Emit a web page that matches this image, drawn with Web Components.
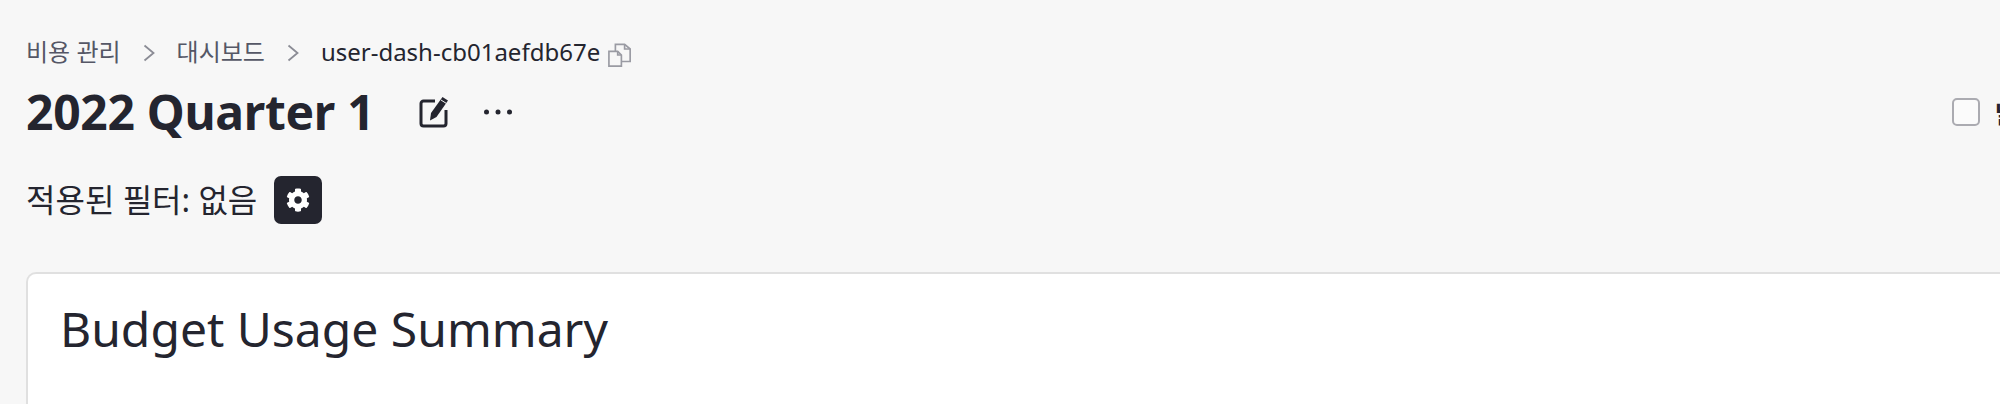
<!DOCTYPE html>
<html lang="ko">
<head>
<meta charset="utf-8">
<title>2022 Quarter 1</title>
<style>
  html, body { margin: 0; height: 100%; overflow: hidden; }
  body {
    background: #f7f7f7;
    color: #24252f;
    font-family: "Noto Sans", "Noto Sans CJK KR", sans-serif;
  }
</style>
</head>
<body>
<dash-page>
  <dash-breadcrumb slot="crumbs">
    <span>비용 관리</span>
    <span>대시보드</span>
    <span class="current">user-dash-cb01aefdb67e</span>
  </dash-breadcrumb>
  <dash-header slot="header" heading="2022 Quarter 1" toggle="날짜"></dash-header>
  <dash-filters slot="filters">적용된 필터: 없음</dash-filters>
  <dash-card slot="card" heading="Budget Usage Summary"></dash-card>
</dash-page>

<script>
const pageTemplate = document.createElement('template');
pageTemplate.innerHTML = `
  <style>
    :host {
      display: flex;
      flex-direction: column;
      width: 2000px;
      height: 404px;
      box-sizing: border-box;
      padding: 32px 0 0 26px;
      overflow: hidden;
    }
  </style>
  <slot name="crumbs"></slot>
  <slot name="header"></slot>
  <slot name="filters"></slot>
  <slot name="card"></slot>
`;

class DashPage extends HTMLElement {
  constructor() {
    super();
    this.attachShadow({ mode: 'open' }).appendChild(pageTemplate.content.cloneNode(true));
  }
}

const breadcrumbTemplate = document.createElement('template');
breadcrumbTemplate.innerHTML = `
  <style>
    :host {
      display: flex;
      align-items: center;
      height: 40px;
      font-size: 24px;
      line-height: 40px;
      color: #555766;
    }
    .items { display: flex; align-items: center; }
    .copy { margin-left: 8px; margin-top: 5px; display: block; }
    ::slotted(span) { white-space: nowrap; }
    ::slotted(.current) { color: #24252f; }
    ::slotted(span:not(:first-child)) {
      margin-left: 56px;
      position: relative;
    }
  </style>
  <div class="items"><slot></slot></div>
  <svg class="copy" width="24" height="24" viewBox="0 0 26 26" fill="none" stroke="#9a9ba3" stroke-width="1.8">
    <path d="M1 9h9.500l4 4v12H1z"/>
    <path d="M8 9V1.500h10l6 5V20H15"/>
    <path d="M18 1.500v5h6M10.500 9v4h4"/>
  </svg>
`;

class DashBreadcrumb extends HTMLElement {
  constructor() {
    super();
    this.attachShadow({ mode: 'open' }).appendChild(breadcrumbTemplate.content.cloneNode(true));
  }
}

const chevronTemplate = document.createElement('template');
chevronTemplate.innerHTML = `
  <style>
    :host { position: absolute; display: block; left: -35px; top: 50%; width: 14px; height: 20px; margin-top: -9px; }
    svg { display: block; }
  </style>
  <svg width="14" height="20" viewBox="0 0 14 20" fill="none" stroke="#8b8c95" stroke-width="1.8">
    <path d="M2.500 2.500l9 7.500-9 7.500"/>
  </svg>
`;

class DashChevron extends HTMLElement {
  constructor() {
    super();
    this.attachShadow({ mode: 'open' }).appendChild(chevronTemplate.content.cloneNode(true));
  }
}

const headerTemplate = document.createElement('template');
headerTemplate.innerHTML = `
  <style>
    :host {
      display: flex;
      align-items: center;
      height: 80px;
    }
    h1 {
      margin: 0;
      font-size: 48px;
      line-height: 80px;
      font-weight: 700;
      letter-spacing: -0.3px;
      color: #24252f;
      white-space: nowrap;
    }
    .edit { margin-left: 45px; display: block; }
    .more { margin-left: 34px; display: block; }
    .toggle {
      position: absolute;
      left: 1952px;
      display: flex;
      align-items: center;
      gap: 15px;
      font-size: 24px;
      font-weight: 700;
      white-space: nowrap;
    }
    .box {
      width: 24px;
      height: 24px;
      border: 2px solid #ababb1;
      border-radius: 5px;
      background: #fbfbfb;
      flex: none;
    }
  </style>
  <h1></h1>
  <svg class="edit" width="30" height="32" viewBox="0 0 30 32" fill="none">
    <path d="M16 5H4.500A2.500 2.500 0 0 0 2 7.500v20A2.500 2.500 0 0 0 4.500 30h20a2.500 2.500 0 0 0 2.500-2.500V14" stroke="#24252f" stroke-width="3"/>
    <path d="M23.500 1l5.500 3.500-11.500 16.500-6.500 3.500 1-7.500z" fill="#24252f"/>
    <path d="M22 4l5.500 3.500" stroke="#f7f7f7" stroke-width="1"/>
  </svg>
  <svg class="more" width="30" height="8" viewBox="0 0 30 8" fill="#24252f">
    <circle cx="3.500" cy="4" r="2.500"/><circle cx="15" cy="4" r="2.500"/><circle cx="26.500" cy="4" r="2.500"/>
  </svg>
  <label class="toggle"><span class="box"></span><span class="label"></span></label>
`;

class DashHeader extends HTMLElement {
  constructor() {
    super();
    const root = this.attachShadow({ mode: 'open' });
    root.appendChild(headerTemplate.content.cloneNode(true));
    root.querySelector('h1').textContent = this.getAttribute('heading');
    root.querySelector('.label').textContent = this.getAttribute('toggle');
  }
}

const filtersTemplate = document.createElement('template');
filtersTemplate.innerHTML = `
  <style>
    :host {
      display: flex;
      align-items: center;
      gap: 17px;
      margin-top: 24px;
      height: 48px;
      font-size: 32px;
      color: #24252f;
    }
    span { padding-bottom: 4px; }
    button {
      width: 48px;
      height: 48px;
      padding: 0;
      border: 0;
      border-radius: 7px;
      background: #24252f;
      display: flex;
      align-items: center;
      justify-content: center;
    }
    svg { display: block; }
  </style>
  <span><slot></slot></span>
  <button type="button" aria-label="필터 설정">
    <svg width="24" height="24" viewBox="0 0 512 512" fill="#fff">
      <path d="M487.400 315.700l-42.600-24.600c4.300-23.200 4.300-47 0-70.200l42.600-24.600c4.900-2.800 7.100-8.600 5.500-14-11.100-35.600-30-67.800-54.700-94.600-3.800-4.100-10-5.100-14.800-2.300L380.800 110c-17.900-15.400-38.500-27.300-60.800-35.100V25.800c0-5.600-3.900-10.500-9.400-11.700-36.700-8.200-74.300-7.800-109.200 0-5.500 1.200-9.400 6.100-9.400 11.700V75c-22.200 7.900-42.800 19.800-60.800 35.100L88.700 85.500c-4.900-2.800-11-1.900-14.800 2.300-24.700 26.700-43.600 58.900-54.700 94.600-1.700 5.400.6 11.200 5.500 14L67.300 221c-4.300 23.200-4.300 47 0 70.200l-42.600 24.600c-4.900 2.800-7.100 8.600-5.500 14 11.100 35.600 30 67.800 54.700 94.600 3.800 4.100 10 5.100 14.800 2.300l42.600-24.600c17.900 15.400 38.500 27.300 60.800 35.100v49.200c0 5.600 3.900 10.500 9.400 11.700 36.700 8.200 74.300 7.800 109.200 0 5.500-1.200 9.400-6.100 9.400-11.700v-49.200c22.200-7.900 42.800-19.800 60.800-35.100l42.600 24.600c4.900 2.800 11 1.900 14.800-2.300 24.700-26.700 43.600-58.900 54.700-94.600 1.500-5.500-.7-11.300-5.600-14.100zM256 336c-44.100 0-80-35.900-80-80s35.900-80 80-80 80 35.900 80 80-35.900 80-80 80z"/>
    </svg>
  </button>
`;

class DashFilters extends HTMLElement {
  constructor() {
    super();
    this.attachShadow({ mode: 'open' }).appendChild(filtersTemplate.content.cloneNode(true));
  }
}

const cardTemplate = document.createElement('template');
cardTemplate.innerHTML = `
  <style>
    :host {
      display: block;
      margin-top: 48px;
      height: 200px;
      box-sizing: border-box;
      background: #fff;
      border: 2px solid #e0e0e0;
      border-right: 0;
      border-bottom: 0;
      border-radius: 10px 0 0 0;
      padding: 23px 0 0 32px;
    }
    h2 {
      margin: 0;
      font-size: 48px;
      line-height: 64px;
      font-weight: 400;
      color: #24252f;
      white-space: nowrap;
    }
  </style>
  <h2></h2>
`;

class DashCard extends HTMLElement {
  constructor() {
    super();
    const root = this.attachShadow({ mode: 'open' });
    root.appendChild(cardTemplate.content.cloneNode(true));
    root.querySelector('h2').textContent = this.getAttribute('heading');
  }
}

customElements.define('dash-page', DashPage);
customElements.define('dash-chevron', DashChevron);
customElements.define('dash-breadcrumb', DashBreadcrumb);
customElements.define('dash-header', DashHeader);
customElements.define('dash-filters', DashFilters);
customElements.define('dash-card', DashCard);

document.querySelectorAll('dash-breadcrumb span:not(:first-child)').forEach((item) => {
  item.prepend(document.createElement('dash-chevron'));
});
</script>
</body>
</html>
